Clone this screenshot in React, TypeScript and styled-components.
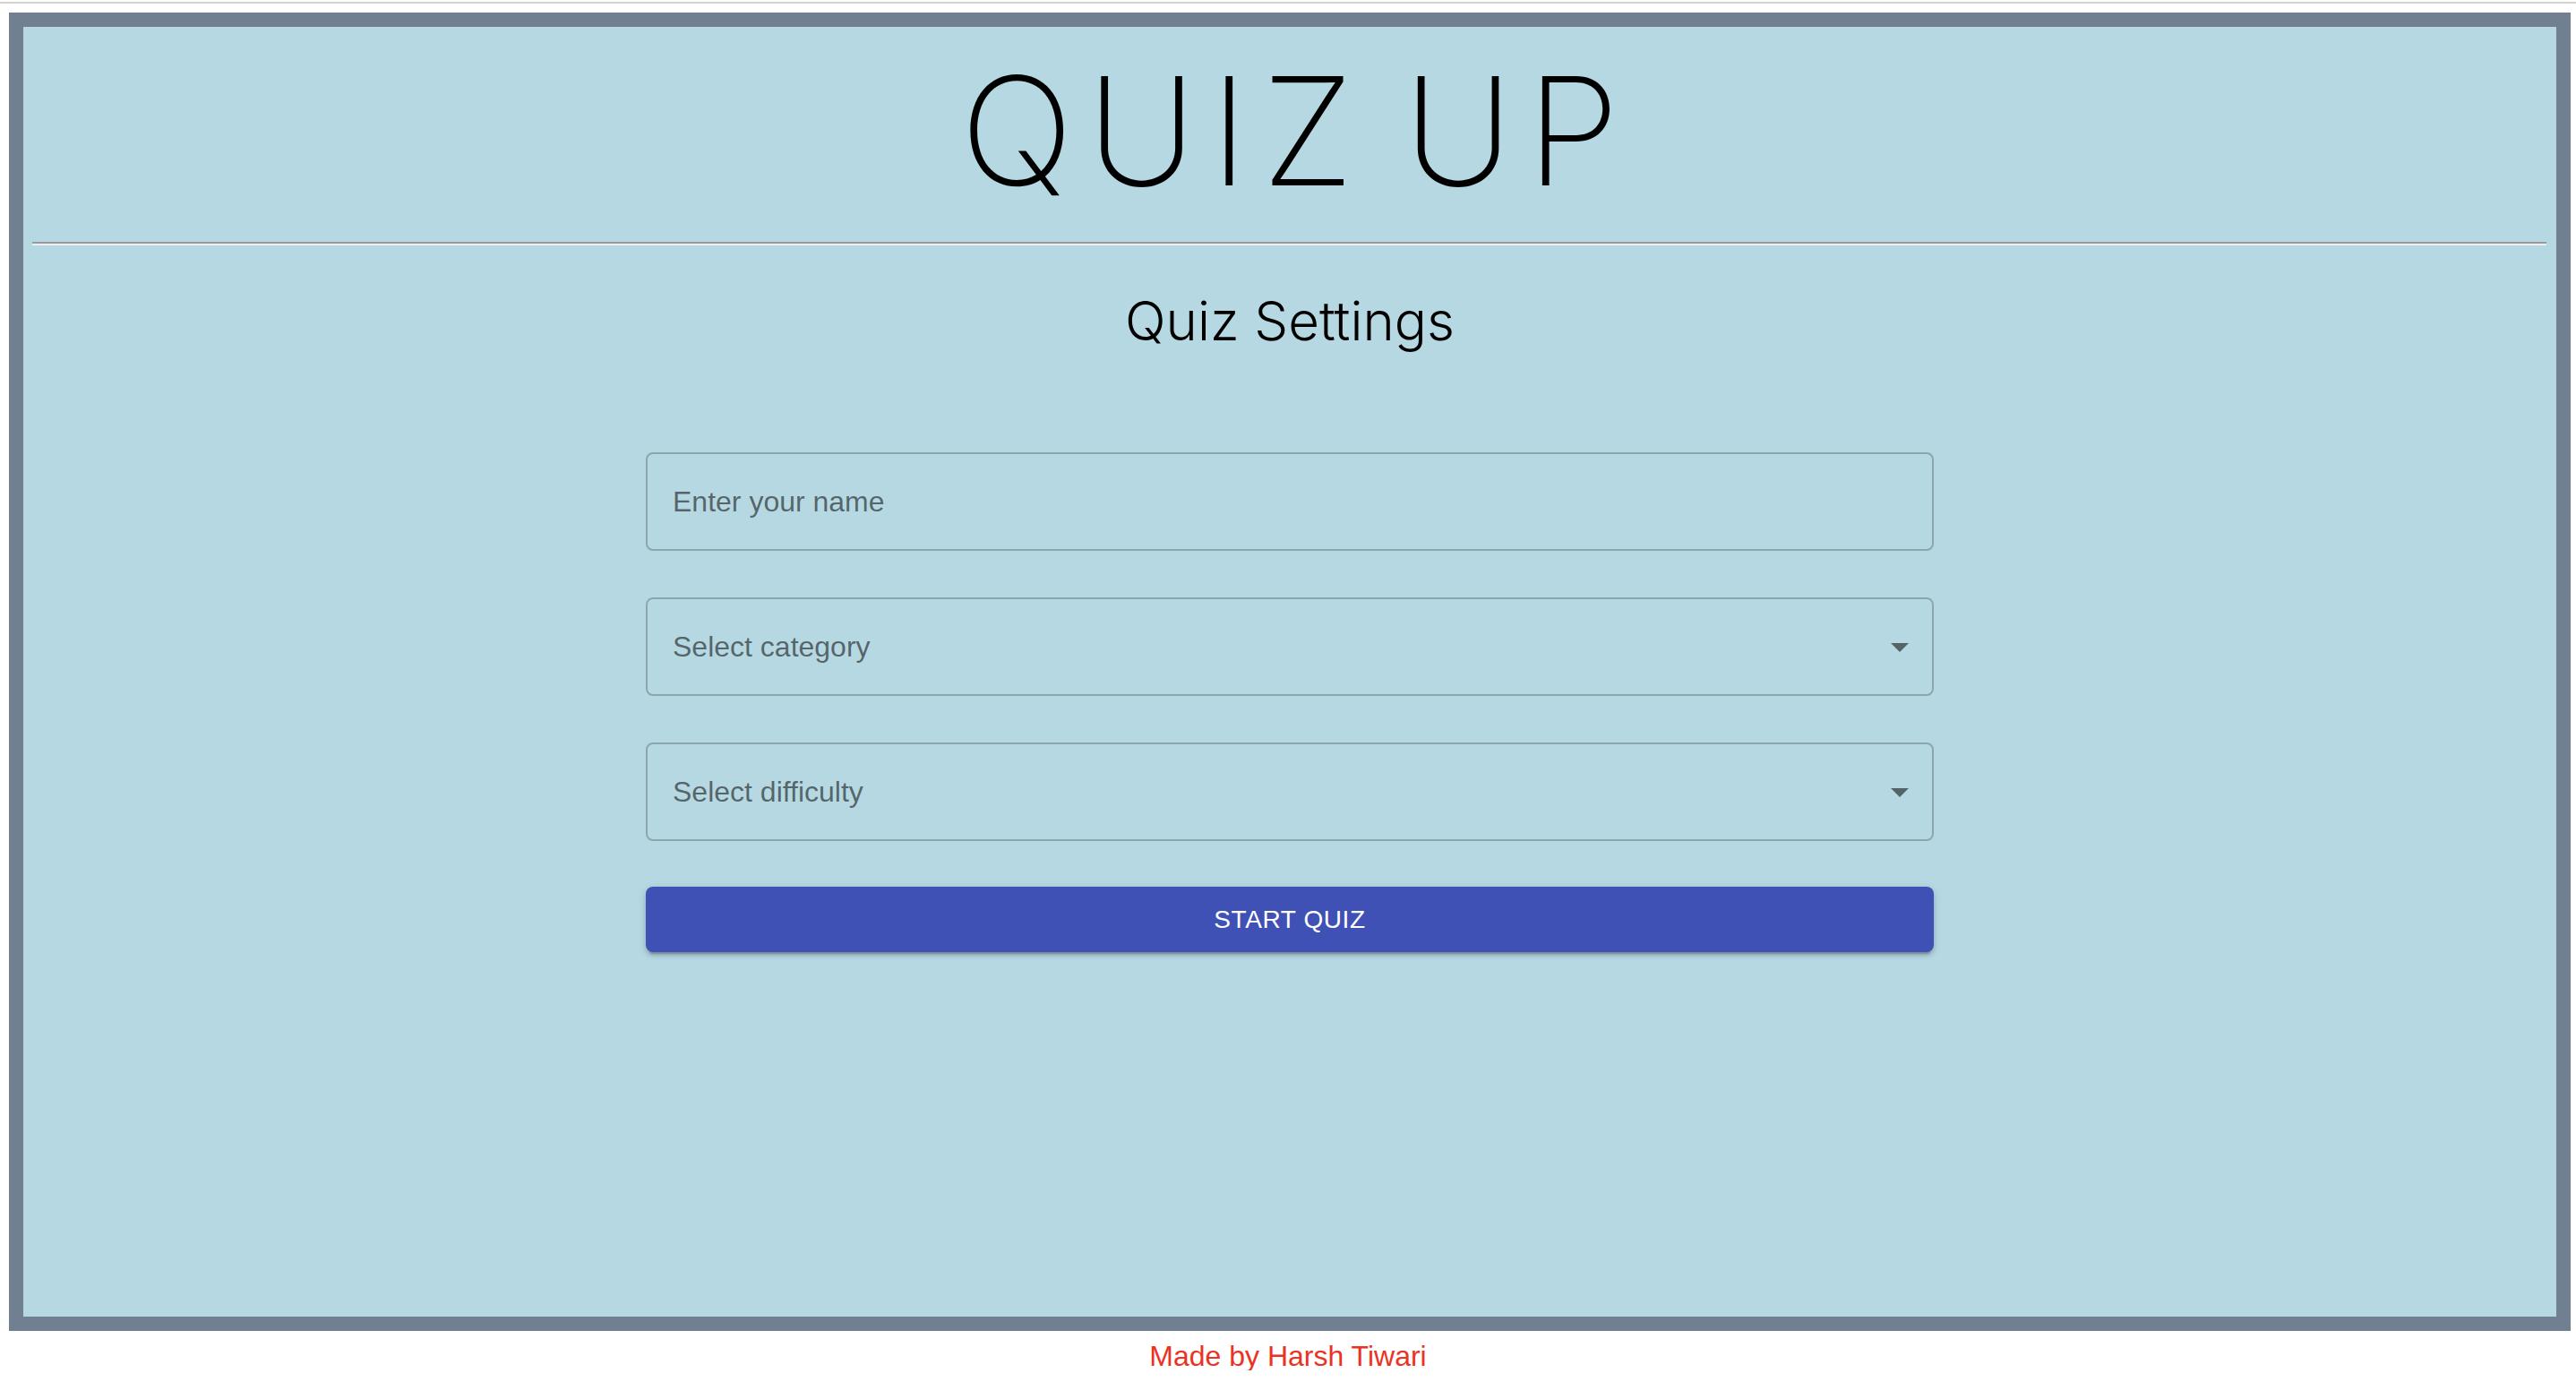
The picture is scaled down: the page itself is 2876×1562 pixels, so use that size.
import React from "react";
import styled, { createGlobalStyle } from "styled-components";

const GlobalStyle = createGlobalStyle`
  html, body {
    margin: 0;
    padding: 0;
    background: #ffffff;
  }
  * { box-sizing: border-box; }
`;

const TopLine = styled.div`
  height: 2px;
  margin-top: 2px;
  background: #d3d3d3;
`;

const Frame = styled.main`
  margin: 10px 6px 0 10px;
  height: 1472px;
  border: 16px solid #708090;
  background: #b6d8e3;
  display: flex;
  flex-direction: column;
  align-items: stretch;
`;

const Title = styled.h1`
  margin: 32px 0 0;
  padding-left: 15px;
  font-family: "Inter", "Noto Sans", sans-serif;
  font-weight: 200;
  font-size: 168px;
  letter-spacing: 15px;
  word-spacing: -22px;
  line-height: 1;
  text-align: center;
  color: #000;
`;

const Divider = styled.hr`
  margin: 40px 11px 0 10px;
  border: 0;
  border-top: 2px solid #9a9a9a;
  border-bottom: 2px solid #eeeeee;
  height: 0;
`;

const Subtitle = styled.h2`
  margin: 54px 0 0;
  font-family: "Inter", "Noto Sans", sans-serif;
  font-weight: 300;
  font-size: 60px;
  line-height: 1;
  text-align: center;
  color: #000;
`;

const Form = styled.form`
  width: 1438px;
  margin: 117px auto 0;
  display: flex;
  flex-direction: column;
  gap: 52px;
`;

const fieldBase = `
  width: 100%;
  height: 110px;
  border: 2px solid rgba(0, 0, 0, 0.23);
  border-radius: 8px;
  background: transparent;
  font-family: "Liberation Sans", Arial, sans-serif;
  font-size: 32px;
  color: rgba(0, 0, 0, 0.87);
  padding: 0 28px;
`;

const TextField = styled.input`
  ${fieldBase}
  outline: none;
  &::placeholder {
    color: rgba(0, 0, 0, 0.55);
    opacity: 1;
  }
`;

const SelectBox = styled.div`
  ${fieldBase}
  position: relative;
  display: flex;
  align-items: center;
  color: rgba(0, 0, 0, 0.55);
  cursor: pointer;
`;

const Arrow = styled.svg`
  position: absolute;
  right: 12px;
  top: 50%;
  width: 48px;
  height: 48px;
  margin-top: -24px;
  fill: rgba(0, 0, 0, 0.54);
`;

const StartButton = styled.button`
  margin-top: -1px;
  height: 73px;
  width: 100%;
  border: 0;
  border-radius: 8px;
  background: #3f51b5;
  color: #fff;
  font-family: "Liberation Sans", Arial, sans-serif;
  font-size: 28px;
  letter-spacing: 0.6px;
  text-transform: uppercase;
  cursor: pointer;
  box-shadow: 0px 6px 2px -4px rgba(0, 0, 0, 0.2),
    0px 4px 4px 0px rgba(0, 0, 0, 0.14),
    0px 2px 10px 0px rgba(0, 0, 0, 0.12);
`;

const Footer = styled.footer`
  margin-top: 12px;
  text-align: center;
  font-family: "Liberation Sans", Arial, sans-serif;
  font-size: 32px;
  line-height: 1;
  color: #ea3323;
`;

const Select: React.FC<{ label: string }> = ({ label }) => (
  <SelectBox role="button">
    {label}
    <Arrow viewBox="0 0 24 24" aria-hidden="true">
      <path d="M7 10l5 5 5-5z" />
    </Arrow>
  </SelectBox>
);

export default function App() {
  return (
    <>
      <GlobalStyle />
      <TopLine />
      <Frame>
        <Title>QUIZ UP</Title>
        <Divider />
        <Subtitle>Quiz Settings</Subtitle>
        <Form onSubmit={(e) => e.preventDefault()}>
          <TextField placeholder="Enter your name" />
          <Select label="Select category" />
          <Select label="Select difficulty" />
          <StartButton type="submit">Start Quiz</StartButton>
        </Form>
      </Frame>
      <Footer>Made by Harsh Tiwari</Footer>
    </>
  );
}
